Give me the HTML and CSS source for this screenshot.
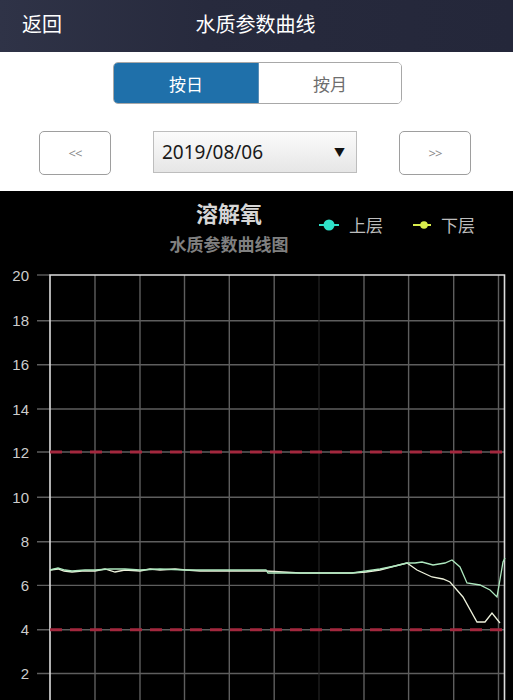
FILE: index.html
```html
<!DOCTYPE html>
<html lang="zh">
<head>
<meta charset="utf-8">
<title>水质参数曲线</title>
<link rel="stylesheet" href="styles.css">
</head>
<body>
<header class="topbar">
  <span class="back">返回</span>
  <span class="title">水质参数曲线</span>
  <span></span>
</header>
<section class="controls">
  <div class="segmented">
    <span class="seg active">按日</span>
    <span class="seg">按月</span>
  </div>
  <div class="nav-row">
    <span class="nav-btn">&lt;&lt;</span>
    <span class="date-select"><span class="date-text">2019/08/06</span><span class="caret">▼</span></span>
    <span class="nav-btn">&gt;&gt;</span>
  </div>
</section>
<section class="chart">
  <div class="chart-head">
    <div class="chart-titles">
      <div class="chart-title">溶解氧</div>
      <div class="chart-sub">水质参数曲线图</div>
    </div>
    <div class="legend">
      <span class="legend-item">
        <svg width="20" height="12" viewBox="0 0 20 12"><line x1="0" y1="6" x2="20" y2="6" stroke="#2fe0c8" stroke-width="2"/><circle cx="10" cy="6" r="5.5" fill="#2fe0c8"/></svg>
        <span>上层</span>
      </span>
      <span class="legend-item">
        <svg width="18" height="12" viewBox="0 0 18 12"><line x1="0" y1="6" x2="18" y2="6" stroke="#d8ec4c" stroke-width="2"/><circle cx="11" cy="6" r="3.8" fill="#d8ec4c"/></svg>
        <span>下层</span>
      </span>
    </div>
  </div>
  <svg class="plot" width="513" height="438" viewBox="0 262 513 438">
    <g class="grid" stroke="#5e5e5e" stroke-width="1.4">
      <line x1="37" y1="320.8" x2="504" y2="320.8"/>
      <line x1="37" y1="364.8" x2="504" y2="364.8"/>
      <line x1="37" y1="409" x2="504" y2="409"/>
      <line x1="37" y1="452" x2="504" y2="452"/>
      <line x1="37" y1="497.3" x2="504" y2="497.3"/>
      <line x1="37" y1="541.7" x2="504" y2="541.7"/>
      <line x1="37" y1="585.4" x2="504" y2="585.4"/>
      <line x1="37" y1="629.7" x2="504" y2="629.7"/>
      <line x1="37" y1="673.5" x2="504" y2="673.5"/>
      <line x1="95" y1="275" x2="95" y2="700"/>
      <line x1="140" y1="275" x2="140" y2="700"/>
      <line x1="184.5" y1="275" x2="184.5" y2="700"/>
      <line x1="229.3" y1="275" x2="229.3" y2="700"/>
      <line x1="274.2" y1="275" x2="274.2" y2="700"/>
      <line x1="364" y1="275" x2="364" y2="700"/>
      <line x1="408.6" y1="275" x2="408.6" y2="700"/>
      <line x1="453.7" y1="275" x2="453.7" y2="700"/>
      <line x1="498.5" y1="275" x2="498.5" y2="700"/>
    </g>
    <line x1="319" y1="275" x2="319" y2="700" stroke="#242424" stroke-width="1.2"/>
    <line x1="37" y1="275" x2="50" y2="275" stroke="#5e5e5e" stroke-width="1.4"/>
    <g stroke="#dcdcdc" stroke-width="1.6" fill="none">
      <polyline points="50,700 50,275 504.5,275 504.5,700"/>
    </g>
    <g stroke="#a3283e" stroke-width="3" stroke-dasharray="12 8">
      <line x1="50" y1="452" x2="504" y2="452"/>
      <line x1="50" y1="629.7" x2="504" y2="629.7"/>
    </g>
    <polyline fill="none" stroke="#eef2dc" stroke-width="1.3" points="50,570 58,569 64,571 72,572 82,571 95,571 105,569 115,572 125,570 140,571 150,569 160,570 175,569 186,570 200,571 266,571 300,573 330,573 352,573 366,572 380,570 395,566 407,563 417,570 432,577 443,579 450,582 463,597 477,622 485,622 492,613 500,623"/>
    <polyline fill="none" stroke="#aee8bf" stroke-width="1.3" points="50,570 58,568 65,570 72,571 85,570 95,570 110,569 125,569 140,570 160,569 186,570 200,570 266,570 268,573 330,573 352,573 366,571 380,569 395,566 407,563 415,563 422,562 433,565 445,563 452,560 460,567 467,583 480,585 490,590 497,597 503,562 505,558"/>
    <g class="ylabels" fill="#cccccc" font-size="15" text-anchor="end">
      <text x="29" y="280.5">20</text>
      <text x="29" y="326.3">18</text>
      <text x="29" y="370.3">16</text>
      <text x="29" y="414.5">14</text>
      <text x="29" y="457.5">12</text>
      <text x="29" y="502.8">10</text>
      <text x="29" y="547.2">8</text>
      <text x="29" y="590.9">6</text>
      <text x="29" y="635.2">4</text>
      <text x="29" y="679">2</text>
    </g>
  </svg>
</section>
</body>
</html>
```

FILE: styles.css
```css
html, body {
  margin: 0;
  padding: 0;
  background: #000;
}
body {
  width: 513px;
  height: 700px;
  overflow: hidden;
  font-family: "Noto Sans CJK SC", "Noto Sans", sans-serif;
}
.topbar {
  height: 52px;
  display: grid;
  grid-template-columns: 1fr auto 1fr;
  align-items: center;
  padding: 0 22px;
  background: linear-gradient(90deg, #2f3347 0%, #272a3d 40%, #24273a 100%);
  color: #ffffff;
  font-size: 20px;
  line-height: 1;
}
.back {
  justify-self: start;
  padding-bottom: 4px;
}
.title {
  padding-bottom: 4px;
  margin-right: 2px;
}
.controls {
  background: #ffffff;
  height: 139px;
  padding-top: 10px;
  box-sizing: border-box;
}
.segmented {
  margin-left: 113px;
  width: 289px;
  height: 42px;
  box-sizing: border-box;
  border: 1.5px solid #a8a8a8;
  border-radius: 5px;
  display: flex;
  overflow: hidden;
}
.seg {
  flex: 1;
  display: flex;
  align-items: center;
  justify-content: center;
  font-size: 17px;
  color: #6e6e6e;
  background: #ffffff;
}
.seg.active {
  background: #1f70aa;
  color: #ffffff;
  flex: 0 0 144px;
  border-right: 1px solid #5a8fb8;
}
.nav-row {
  margin-top: 27px;
  display: flex;
  align-items: flex-start;
  padding-left: 39px;
}
.nav-btn {
  width: 72px;
  height: 44px;
  box-sizing: border-box;
  border: 1.5px solid #9e9e9e;
  border-radius: 5px;
  display: flex;
  align-items: center;
  justify-content: center;
  font-family: "Noto Sans", sans-serif;
  font-size: 13px;
  color: #8a8a8a;
  letter-spacing: -1px;
}
.date-select {
  margin-left: 42px;
  margin-right: 42px;
  width: 204px;
  height: 42px;
  box-sizing: border-box;
  border: 1px solid #bdbdbd;
  background: linear-gradient(#fbfbfb, #e6e6e6);
  display: flex;
  align-items: center;
  justify-content: space-between;
  padding: 0 11px 0 8px;
  color: #1a1a1a;
}
.date-text {
  font-family: "Noto Sans", sans-serif;
  font-size: 19px;
}
.caret {
  font-size: 11px;
  color: #111;
}
.chart {
  background: #000;
  height: 509px;
}
.chart-head {
  height: 71px;
  display: flex;
  align-items: flex-start;
  padding-left: 149px;
}
.chart-titles {
  width: 160px;
  text-align: center;
  padding-top: 8px;
}
.chart-title {
  font-size: 22px;
  font-weight: bold;
  color: #d6d6d6;
  line-height: 26px;
}
.chart-sub {
  font-size: 17px;
  color: #808080;
  line-height: 22px;
  margin-top: 8px;
  font-weight: bold;
}
.legend {
  display: flex;
  gap: 30px;
  margin-left: 10px;
  margin-top: 24px;
  align-items: center;
}
.legend-item {
  display: flex;
  align-items: center;
  gap: 10px;
  font-size: 17px;
  color: #bdbdbd;
  line-height: 20px;
}
.legend-item svg {
  display: block;
}
.plot {
  display: block;
  font-family: "Liberation Sans", sans-serif;
}
```
